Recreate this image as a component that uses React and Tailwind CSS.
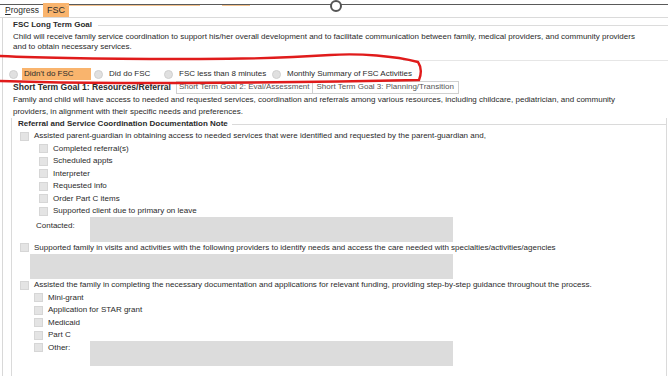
function Box({ className = "" }) {
    return <span className={"inline-block w-[9px] h-[9px] bg-[#e4e4e4] border border-[#d6d6d6] shrink-0 " + className}></span>
}

function CheckRow({ indent, children }) {
    return (
        <div className={"flex items-center h-[12.5px] " + indent}>
            <Box />
            <span className="ml-[5px] whitespace-nowrap">{children}</span>
        </div>
    )
}

function Radio({ label, highlight, width }) {
    return (
        <div className={"flex items-center shrink-0 " + width}>
            <span className="w-[9px] h-[9px] rounded-full bg-[#e0e0e0] border border-[#d0d0d0]"></span>
            {highlight
                ? <span className="ml-[4px] pl-[2px] w-[69px] h-[12px] flex items-center bg-[#f9b46d]">{label}</span>
                : <span className="ml-[6px] h-[12px] flex items-center">{label}</span>}
        </div>
    )
}

export default function App() {
    return (
        <div className="relative w-[668px] h-[376px] overflow-hidden bg-white text-[#2a2a2a] text-[8px]" style={{ fontFamily: '"Liberation Sans", Arial, sans-serif' }}>

            {/* Top rule + tabs */}
            <div className="h-[4px]"></div>
            <div className="h-px bg-[#5a5a5a]"></div>
            <div className="flex items-end h-[13px] border-b border-[#dadada]">
                <span className="pl-[5px] pr-[4px] text-[8.5px] leading-[13px]"><u>P</u>rogress</span>
                <span className="px-[4px] text-[9px] leading-[14px] bg-[#f9b46d]">FSC</span>
            </div>

            <div className="border-l border-[#d8d8d8] ml-[2px]">
                {/* Long term goal */}
                <div className="pl-[10px] pt-[1px]">
                    <div className="flex items-center h-[12px]">
                        <span className="font-bold whitespace-nowrap">FSC Long Term Goal</span>
                        <div className="flex-1 h-px bg-[#dcdcdc] ml-[6px]"></div>
                    </div>
                    <div className="mt-[1px] leading-[10px] pr-[20px]">
                        Child will receive family service coordination to support his/her overall development and to facilitate communication between family, medical providers, and community providers and to obtain necessary services.
                    </div>
                </div>

                <div className="h-px bg-[#e6e6e6] mt-[8px] ml-[400px]"></div>

                {/* Radio row */}
                <div className="flex items-center pl-[6px] mt-[7px] h-[12px]">
                    <Radio label="Didn't do FSC" highlight width="w-[85px]" />
                    <Radio label="Did do FSC" width="w-[70px]" />
                    <Radio label="FSC less than 8 minutes" width="w-[108px]" />
                    <Radio label="Monthly Summary of FSC Activities" width="w-[150px]" />
                </div>

                {/* Short term goal tabs */}
                <div className="flex items-end h-[14px] pl-[10px]">
                    <span className="font-bold text-[8.6px] leading-[14px] whitespace-nowrap pr-[5px]">Short Term Goal 1: Resources/Referral</span>
                    <span className="h-[13px] border border-[#d0d0d0] px-[2px] text-[#555] leading-[10px] overflow-hidden whitespace-nowrap">Short Term Goal 2: Eval/Assessment</span>
                    <span className="h-[13px] border border-l-0 border-[#d0d0d0] px-[4px] text-[#555] leading-[10px] overflow-hidden whitespace-nowrap">Short Term Goal 3: Planning/Transition</span>
                </div>
                <div className="pl-[10px] pr-[20px] leading-[11.5px]">
                    Family and child will have access to needed and requested services, coordination and referrals among various resources, including childcare, pediatrician, and community providers, in alignment with their specific needs and preferences.
                </div>

                {/* Documentation note group */}
                <div className="ml-[8px] mr-[1px] mt-[1px] border border-[#dadada] border-t-0 h-[300px]">
                    <div className="flex items-center h-[12px]">
                        <span className="font-bold whitespace-nowrap pl-[6px] pr-[4px]">Referral and Service Coordination Documentation Note</span>
                        <div className="flex-1 h-px bg-[#dadada]"></div>
                    </div>

                    <div>
                        <CheckRow indent="pl-[8px]">Assisted parent-guardian in obtaining access to needed services that were identified and requested by the parent-guardian and,</CheckRow>
                        <CheckRow indent="pl-[27px]">Completed referral(s)</CheckRow>
                        <CheckRow indent="pl-[27px]">Scheduled appts</CheckRow>
                        <CheckRow indent="pl-[27px]">Interpreter</CheckRow>
                        <CheckRow indent="pl-[27px]">Requested info</CheckRow>
                        <CheckRow indent="pl-[27px]">Order Part C items</CheckRow>
                        <CheckRow indent="pl-[27px]">Supported client due to primary on leave</CheckRow>
                        <div className="flex items-start pl-[24px] -mt-[1px]">
                            <span className="mt-[3px] w-[54px]">Contacted:</span>
                            <div className="w-[363px] h-[25px] bg-[#dcdcdc]"></div>
                        </div>
                        <CheckRow indent="pl-[8px]">Supported family in visits and activities with the following providers to identify needs and access the care needed with specialties/activities/agencies</CheckRow>
                        <div className="ml-[18px] w-[423px] h-[25px] bg-[#dcdcdc]"></div>
                        <CheckRow indent="pl-[8px]">Assisted the family in completing the necessary documentation and applications for relevant funding, providing step-by-step guidance throughout the process.</CheckRow>
                        <CheckRow indent="pl-[22px]">Mini-grant</CheckRow>
                        <CheckRow indent="pl-[22px]">Application for STAR grant</CheckRow>
                        <CheckRow indent="pl-[22px]">Medicaid</CheckRow>
                        <CheckRow indent="pl-[22px]">Part C</CheckRow>
                        <div className="flex items-start pl-[22px]">
                            <div className="flex items-center h-[12px] w-[56px]">
                                <Box />
                                <span className="ml-[5px]">Other:</span>
                            </div>
                            <div className="w-[363px] h-[25px] bg-[#dcdcdc] -mt-[1px]"></div>
                        </div>
                    </div>
                </div>
            </div>

            {/* Overlays: slider knob, orange marks, red annotation */}
            <span className="absolute left-[330px] top-[0px] w-[12px] h-[12px] rounded-full border-2 border-[#555] bg-white"></span>
            <span className="absolute left-[66px] top-[5px] w-[134px] h-px bg-[#f3c28e]"></span>
            <span className="absolute left-[222px] top-[5px] w-[28px] h-px bg-[#f3c28e]"></span>
            <svg className="absolute left-0 top-0 pointer-events-none" width="668" height="376">
                <path d="M0 56 C 40 58 120 59 200 59 C 260 59 300 57 330 55 C 360 53 395 56 418 62 C 422 68 421 75 419 80 C 330 82 220 83 120 83 C 70 83 30 82 0 81" fill="none" stroke="#e01b1b" strokeWidth="2.4" strokeLinecap="round" />
            </svg>
        </div>
    )
}
